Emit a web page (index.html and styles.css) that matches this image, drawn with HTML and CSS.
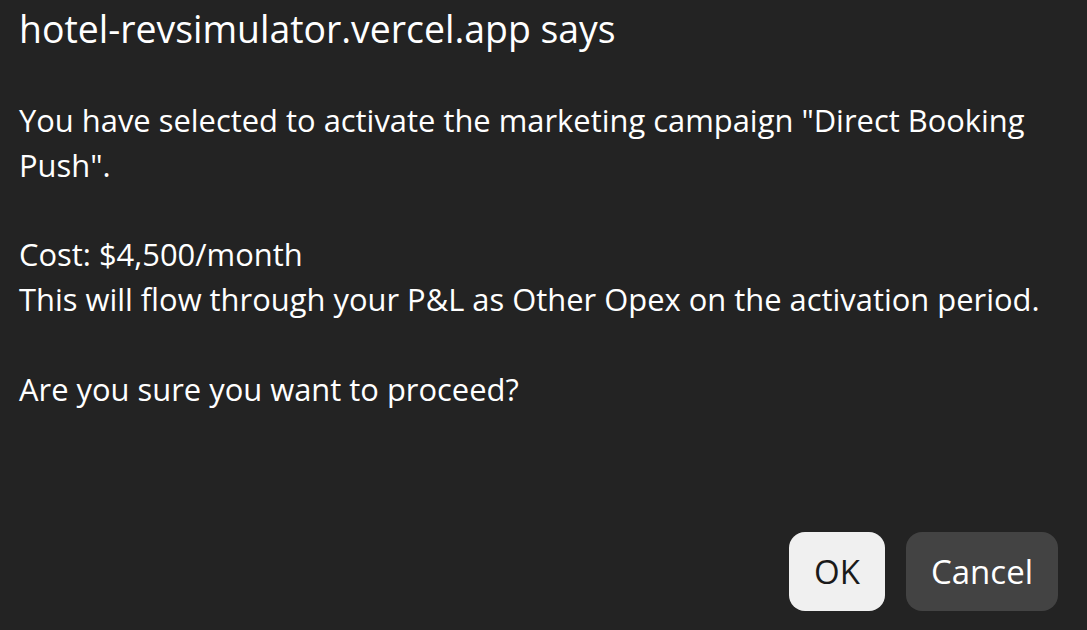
FILE: index.html
```html
<!DOCTYPE html>
<html>
<head>
<meta charset="utf-8">
<link rel="stylesheet" href="styles.css">
</head>
<body>
<div class="dialog">
  <h1 class="title">hotel-revsimulator.vercel.app says</h1>
  <p class="message">You have selected to activate the marketing campaign "Direct Booking Push".

Cost: $4,500/month
This will flow through your P&amp;L as Other Opex on the activation period.

Are you sure you want to proceed?</p>
  <div class="actions">
    <button class="btn btn-ok">OK</button>
    <button class="btn btn-cancel">Cancel</button>
  </div>
</div>
</body>
</html>
```
FILE: styles.css
```css
html, body {
  margin: 0;
  padding: 0;
  background: #232323;
  height: 100%;
}
.dialog {
  box-sizing: border-box;
  height: 630px;
  display: flex;
  flex-direction: column;
  padding: 7px 19px 19px 19px;
  font-family: "Open Sans", "Noto Sans", sans-serif;
  color: #ffffff;
}
.title {
  margin: 0;
  font-size: 37.4px;
  font-weight: 400;
  line-height: 44px;
}
.message {
  margin: 47px 0 0 0;
  font-size: 30.9px;
  line-height: 44.8px;
  white-space: pre-wrap;
  flex: 1;
}
.actions {
  display: flex;
  justify-content: flex-end;
  gap: 21px;
  margin-right: 10px;
}
.btn {
  height: 79px;
  border: none;
  border-radius: 16px;
  font-family: inherit;
  font-size: 33px;
  padding: 0 25px;
}
.btn-ok {
  background: #f0f0f0;
  color: #1a1a1a;
}
.btn-cancel {
  background: #434343;
  color: #ffffff;
}
```
